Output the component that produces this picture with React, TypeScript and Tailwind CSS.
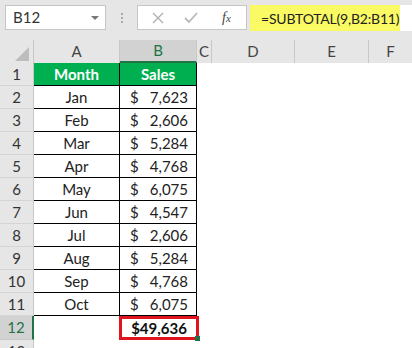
import React from 'react';

const rows = [
  { m: 'Jan', v: '7,623' },
  { m: 'Feb', v: '2,606' },
  { m: 'Mar', v: '5,284' },
  { m: 'Apr', v: '4,768' },
  { m: 'May', v: '6,075' },
  { m: 'Jun', v: '4,547' },
  { m: 'Jul', v: '2,606' },
  { m: 'Aug', v: '5,284' },
  { m: 'Sep', v: '4,768' },
  { m: 'Oct', v: '6,075' },
];

function RowHead({ n, active }: { n: number; active?: boolean }) {
  return (
    <div
      className={
        active
          ? 'w-[34px] h-full flex items-center justify-center bg-[#d2d2d2] text-[#217346] border-r-2 border-r-[#217346] border-b border-b-[#c8c8c8]'
          : 'w-[34px] h-full flex items-center justify-center bg-[#e6e6e6] text-[#333] border-r border-r-[#c8c8c8] border-b border-b-[#d4d4d4]'
      }
    >
      {n}
    </div>
  );
}

function App() {
  return (
    <div
      className="w-[412px] h-[348px] overflow-hidden bg-[#e6e6e6] text-[15px] text-[#222]"
      style={{ fontFamily: 'Lato, "Open Sans", sans-serif' }}
    >
      {/* formula bar */}
      <div className="h-[40px] flex items-start pt-[5px] pl-[5px]">
        <div className="w-[101px] h-[25px] bg-white border border-[#c6c6c6] flex items-center justify-between pl-[7px] pr-[6px] text-[#333]">
          <span>B12</span>
          <span className="w-0 h-0 border-l-[4px] border-r-[4px] border-t-[4px] border-l-transparent border-r-transparent border-t-[#777]" />
        </div>
        <div className="w-[31px] h-[25px] flex flex-col items-center justify-center gap-[2px]">
          <span className="w-[2px] h-[2px] bg-[#aaa]" />
          <span className="w-[2px] h-[2px] bg-[#aaa]" />
          <span className="w-[2px] h-[2px] bg-[#aaa]" />
        </div>
        <div className="w-[110px] h-[25px] bg-white border border-[#c6c6c6] flex items-center">
          <svg width="12" height="12" viewBox="0 0 12 12" className="ml-[14px]">
            <path d="M1 1 L11 11 M11 1 L1 11" stroke="#b0b0b0" strokeWidth="1.4" />
          </svg>
          <svg width="14" height="12" viewBox="0 0 14 12" className="ml-[20px]">
            <path d="M1 6 L5 10 L13 1" stroke="#b8b8b8" strokeWidth="1.8" fill="none" />
          </svg>
          <span className="ml-[24px] italic text-[#444] text-[14px]" style={{ fontFamily: '"Liberation Serif", serif' }}>
            f<span className="text-[11px]">x</span>
          </span>
        </div>
        <div className="w-[3px]" />
        <div className="flex-1 h-[26px] bg-white flex">
          <div className="w-[150px] h-full bg-[#fafa64] flex items-center pl-[11px] text-[14px] tracking-[-0.2px] whitespace-nowrap text-[#222]">
            =SUBTOTAL(9,B2:B11)
          </div>
        </div>
      </div>

      {/* column headers */}
      <div className="h-[23px] flex bg-[#e6e6e6] text-[#444]">
        <div className="w-[34px] h-full flex items-end justify-end pr-[4px] pb-[2px] border-r border-[#c8c8c8]">
          <svg width="14" height="14" viewBox="0 0 14 14">
            <polygon points="14,0 14,14 0,14" fill="#bdbdbd" />
          </svg>
        </div>
        <div className="w-[86px] flex items-center justify-center border-r border-[#c8c8c8]">A</div>
        <div className="w-[77px] flex items-center justify-center bg-[#d2d2d2] text-[#217346] border-b-2 border-[#217346] border-r border-r-[#c8c8c8]">B</div>
        <div className="w-[15px] flex items-center justify-center border-r border-[#c8c8c8]">C</div>
        <div className="w-[83px] flex items-center justify-center border-r border-[#c8c8c8]">D</div>
        <div className="w-[74px] flex items-center justify-center border-r border-[#c8c8c8]">E</div>
        <div className="flex-1 flex items-center justify-center">F</div>
      </div>

      {/* sheet */}
      <div className="h-[23px] flex bg-white">
        <RowHead n={1} />
        <div className="w-[86px] flex items-center justify-center bg-[#00b050] text-white font-bold border-b border-r border-black">Month</div>
        <div className="w-[77px] flex items-center justify-center bg-[#00b050] text-white font-bold border-b border-r border-black">Sales</div>
        <div className="flex-1" />
      </div>
      {rows.map((r, i) => (
        <div key={r.m} className="h-[23px] flex bg-white">
          <RowHead n={i + 2} />
          <div className="w-[86px] flex items-center justify-center border-b border-r border-black">{r.m}</div>
          <div className="w-[77px] flex items-center justify-between pl-[10px] pr-[8px] border-b border-r border-black">
            <span>$</span>
            <span>{r.v}</span>
          </div>
          <div className="flex-1" />
        </div>
      ))}
      <div className="h-[24px] flex bg-white">
        <RowHead n={12} active />
        <div className="w-[85px]" />
        <div className="w-[80px] h-full relative flex items-center justify-center border-[3px] border-[#e0141e] font-bold text-[#111]">
          $49,636
          <span className="absolute right-[-4px] bottom-[-4px] w-[5px] h-[5px] bg-[#217346]" />
        </div>
        <div className="flex-1" />
      </div>
      <div className="h-[23px] flex bg-white">
        <RowHead n={13} />
        <div className="flex-1" />
      </div>
    </div>
  );
}

export default App;
